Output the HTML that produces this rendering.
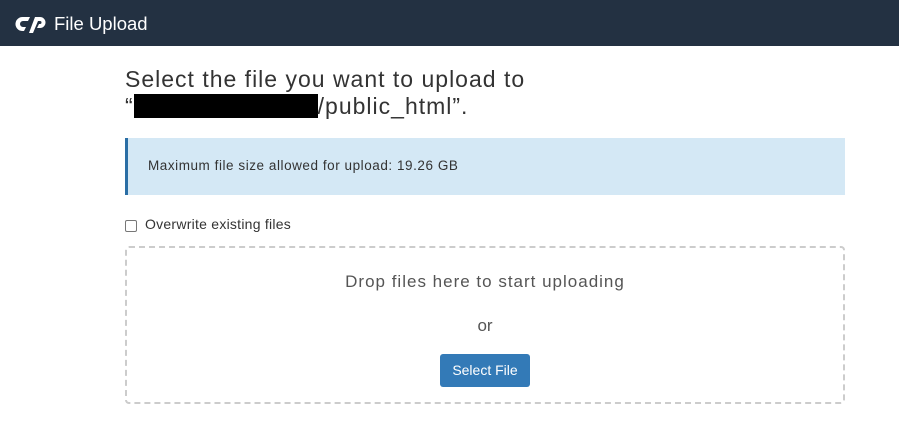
<!DOCTYPE html>
<html><head><meta charset="utf-8"><style>
body{margin:0;width:899px;height:441px;background:#fff;font-family:"Liberation Sans",sans-serif;color:#333;position:relative;overflow:hidden}
.hdr{position:absolute;left:0;top:0;width:899px;height:46px;background:#233142}
.hdr .t{position:absolute;left:54px;top:13px;color:#fff;font-size:18.5px}
h1{position:absolute;left:125px;top:66px;margin:0;font-weight:normal;font-size:23px;letter-spacing:1px;line-height:27px;color:#333}
.red{display:inline-block;width:184px;height:24px;background:#000;vertical-align:-4px}
.info{position:absolute;left:125px;top:138px;width:717px;height:57px;background:#d4e8f5;border-left:3px solid #2a6ea5}
.info span{position:absolute;left:20px;top:20px;font-size:13.5px;letter-spacing:0.55px;color:#333}
.cb{position:absolute;left:125px;top:220px;width:10px;height:10px;border:1px solid #777;border-radius:2px}
.cbl{position:absolute;left:145px;top:216px;font-size:14px;letter-spacing:0.25px}
.dz{position:absolute;left:125px;top:246px;width:716px;height:154px;border:2px dashed #ccc;border-radius:4px}
.d1{position:absolute;left:125px;width:720px;text-align:center;top:272px;font-size:17px;letter-spacing:1px;color:#555}
.d2{position:absolute;left:125px;width:720px;text-align:center;top:316px;font-size:17px;color:#555}
.btn{position:absolute;left:440px;top:354px;width:90px;height:33px;background:#337ab7;border-radius:3px;color:#fff;font-size:14px;text-align:center;line-height:33px}
</style></head><body>
<div class="hdr">
<svg style="position:absolute;left:14px;top:14px" width="32" height="19" viewBox="0 0 32 19"><path d="M9 3h7l-2 4H9a3 3 0 0 0 0 6h3l-2 4H8a7 7 0 0 1 1-14z" fill="#fff"/><path d="M15 19l6-16h5a5.5 5.5 0 0 1 0 11h-3l2-4h1a1.5 1.5 0 0 0 0-3h-2l-5 12z" fill="#fff"/></svg>
<span class="t">File Upload</span></div>
<h1>Select the file you want to upload to<br>“<span class="red"></span>/public_html”.</h1>
<div class="info"><span>Maximum file size allowed for upload: 19.26 GB</span></div>
<div class="cb"></div><div class="cbl">Overwrite existing files</div>
<div class="dz"></div>
<div class="d1">Drop files here to start uploading</div>
<div class="d2">or</div>
<div class="btn">Select File</div>
</body></html>
